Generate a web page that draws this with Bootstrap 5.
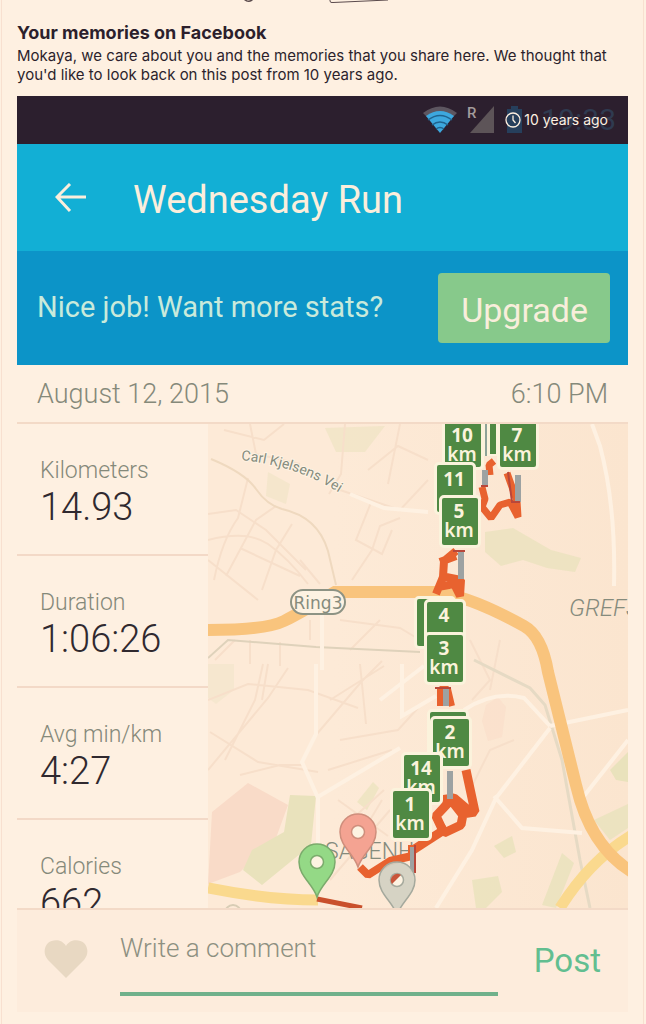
<!DOCTYPE html>
<html lang="en">
<head>
<meta charset="utf-8">
<meta name="viewport" content="width=device-width, initial-scale=1">
<title>Your memories on Facebook</title>
<link href="https://cdn.jsdelivr.net/npm/bootstrap@5.3.0/dist/css/bootstrap.min.css" rel="stylesheet">
<style>
  body { background: #fef0e1; color: #2c1f2c; font-family: Inter, "Liberation Sans", sans-serif; }
  .feed { border-left: 1px solid #f8e0d0; border-right: 1px solid #f8e0d0; padding: 0 15px 13px; margin: 0 2px 0 1px; }
  .prev-post { height: 22px; }
  .memory-title { font-size: 18px; line-height: 22px; font-weight: 700; margin-bottom: 2px; }
  .memory-text { font-size: 15px; line-height: 19px; margin-bottom: 12px; }
  .shot { font-family: Roboto, "Liberation Sans", sans-serif; }
  .statusbar { background: #2c1f2e; height: 48px; padding-right: 12px; }
  .stamp { right: 20px; top: 14px; font: 14px/20px Inter, sans-serif; color: #fef0e1; gap: 3px; }
  .sys-clock { font-size: 30px; line-height: 32px; color: #2f3a50; }
  .appbar { background: #12afd5; color: #fbeedc; height: 107px; padding-left: 38px; gap: 46px; }
  .run-name { font-size: 38px; line-height: 44px; font-weight: 400; padding-top: 4px; }
  .promo { background: #0c94c8; height: 114px; padding: 0 18px 0 20px; color: #c9eadb; font-size: 29px; }
  .btn-upgrade, .btn-upgrade:hover { background: #87c98b; color: #f8eedb; font-size: 34px; line-height: 48px; padding: 13px 22px 9px 23px; border: 0; border-radius: 4px; }
  .daterow { height: 59px; padding: 2px 20px 0; font-size: 27px; font-weight: 300; color: #85897a; border-bottom: 2px solid #f3dac7; }
  .run-body { height: 484px; }
  .stats { width: 191px; overflow: hidden; }
  .stat { flex: 0 0 132px; padding: 34px 0 0 23px; border-bottom: 2px solid #f3d9c7; }
  .stat dt { font-size: 23px; line-height: 26px; font-weight: 300; color: #85897a; }
  .stat dd { font-size: 38px; line-height: 46px; font-weight: 300; color: #30292f; margin: 0; }
  .map { min-width: 0; background: #fdead7; }
  .composer { background: #fdecdc; border-top: 2px solid #f3dac7; height: 104px; padding: 0 27px; }
  .like { margin: 0 32px 4px 0; }
  .comment-box { min-width: 0; margin-right: 36px; border: 0; border-bottom: 4px solid #70b18b; border-radius: 0; background: none; color: #85897a; font-size: 26px; font-weight: 300; line-height: 32px; padding: 22px 0 28px; }
  .comment-box:focus { outline: 0; }
  .comment-box::placeholder { color: #8d9081; opacity: 1; }
  .btn-post, .btn-post:hover { color: #62be90; font-size: 33px; line-height: 40px; padding: 0; border: 0; background: none; }
</style>
</head>
<body>
<main class="feed">
  <div class="prev-post">
    <svg class="d-block w-100" height="8" viewBox="17 0 611 8" preserveAspectRatio="xMinYMin slice" fill="none" stroke="#5a4a4c" aria-hidden="true">
      <path d="M244-1q5 5 10-1" stroke-width="1.500"/><path d="M330-2v3q0 2 3 1.500L388 0" stroke-width="1"/>
    </svg>
  </div>
  <h1 class="memory-title">Your memories on Facebook</h1>
  <p class="memory-text">Mokaya, we care about you and the memories that you share here. We thought that you'd like to look back on this post from 10 years ago.</p>

  <article class="shot">
    <div class="statusbar position-relative d-flex align-items-center justify-content-end">
      <svg width="122" height="36" viewBox="0 0 122 36" aria-hidden="true">
        <path d="M4 11Q21-2 38 11L34 15Q21 5 8 15z" fill="#5d5660"/>
        <path d="M7 14q14-10 28 0L21 31z" fill="#3da8de"/>
        <path d="M9 18q12-9 24 0M13 23q8-6 16 0M17 27q4-3 8 0" fill="none" stroke="#1f638e" stroke-width="1.500"/>
        <text x="48" y="16" font-size="15" font-weight="500" fill="#a39c9c">R</text>
        <path d="M51 31 75 4v27z" fill="#5d5458"/>
        <path d="M88 7h4V4h7v3h4v24H88z" fill="#263f5c"/>
      </svg>
      <span class="sys-clock" aria-hidden="true">19:33</span>
      <div class="stamp position-absolute d-flex align-items-center">
        <svg width="16" height="16" viewBox="0 0 16 16" fill="none" stroke="currentColor" stroke-width="1.300" aria-hidden="true"><circle cx="8" cy="8" r="7"/><path d="M8 3.500V8l2.500 3"/></svg>
        <span>10 years ago</span>
      </div>
    </div>

    <header class="appbar d-flex align-items-center">
      <a href="#" class="text-reset" aria-label="Back">
        <svg class="d-block" width="32" height="30" viewBox="0 0 32 30" fill="none" stroke="currentColor" stroke-width="3" aria-hidden="true"><path d="M15 1 2 14l13 14M2 14h29"/></svg>
      </a>
      <h2 class="run-name mb-0">Wednesday Run</h2>
    </header>

    <section class="promo d-flex align-items-center justify-content-between">
      <span>Nice job! Want more stats?</span>
      <button type="button" class="btn btn-upgrade">Upgrade</button>
    </section>

    <div class="daterow d-flex align-items-center justify-content-between">
      <span>August 12, 2015</span><span>6:10 PM</span>
    </div>

    <div class="run-body d-flex">
      <dl class="stats d-flex flex-column flex-shrink-0 mb-0">
        <div class="stat"><dt>Kilometers</dt><dd>14.93</dd></div>
        <div class="stat"><dt>Duration</dt><dd>1:06:26</dd></div>
        <div class="stat"><dt>Avg min/km</dt><dd>4:27</dd></div>
        <div class="stat"><dt>Calories</dt><dd>662</dd></div>
      </dl>
      <svg class="map flex-fill h-100" viewBox="208 424 420 484" preserveAspectRatio="xMidYMid slice" role="img" aria-label="Route map">
        <defs>
          <path id="street" d="M241 460Q300 466 346 497"/>
          <path id="pin" d="M0 35C-4 22-18 14-18 0A18 18 0 0 1 18 0C18 14 4 22 0 35z"/>
          <rect id="tile" width="36" height="47" rx="2" fill="#4f8943" stroke="#fbf3dc" stroke-width="6" paint-order="stroke"/>
          <linearGradient id="land"><stop offset=".3" stop-color="#fdead7"/><stop offset="1" stop-color="#fbe5cf"/></linearGradient>
        </defs>
        <!-- land -->
        <path d="M208 424H628V908H208z" fill="url(#land)"/>
        <g fill="#f9dbc8"><path d="M212 812 248 783 288 805 276 838 240 872 208 884z"/><path d="M486 705l12-8 8 10-4 30-14 4-6-20z" opacity=".5"/></g>
        <g fill="#e9e2bc">
          <path d="M290 795 316 796 311 845 262 885 243 870 252 850 284 832z"/>
          <path d="M325 428 385 426 365 452 336 452z" opacity=".5"/>
          <path d="M268 472l22 12-4 20-20-8z" opacity=".4"/>
          <path d="M485 532l28-4 38 22 30 8-6 14-28-4-24-8-22 6-16-14z" opacity=".75"/>
          <path d="M357 802l16-20 6 6-12 22z" opacity=".7"/>
          <path d="M494 846l18-10 4 16-12 6zM472 880l26-4 4 16-16 16H476zM542 905l20-52 12 10-18 45zM594 820l34-16v24l-18 12z" opacity=".8"/>
          <path d="M610 770l18-18v30l-12-2z"/>
          <path d="M208 664h26v26l-18 14-8-6z" opacity=".3"/>
        </g>
        <!-- small streets -->
        <g fill="none" stroke="#f7dfca" stroke-width="2">
          <path d="M208 540q40-10 60 4t40 40M208 514l28-4 30 20 40 40M214 580q8-40 24-62l10-40M226 576l30-56 20-14M240 548l60 28M262 590l14-40 16-26M208 560l50 40M300 560l20 24M224 430l40 10 20-16M250 424l6 30 44 10M345 424l-4 50-12 20M340 490l60 20 28-30M368 470l30-24 30 14M352 580l20-30 8-24 20-8M372 500l-16 40 26 14 10-24M400 424l-12 60M208 700l40-16 60 6 50 18M225 760l30-60 8-36M208 770l60-72 20-30M210 732l48 30 60 10M240 775l40-10 22 0M316 735l46-54 20-20M340 740l58-10 20-22M330 700l54-34M328 770l64-20M268 664l-6 36M360 664l6 60M338 800l50 36M340 830l44-40M352 850l30-50M330 880l60-70"/>
          <path d="M340 620l60 8 20 12M350 650l30-30M310 640v-20M470 640l20 40-18 20M500 640l-10 50M470 790l20-40 24-10M215 660l20-20M250 640v24M280 642v24"/>
        </g>
        <g fill="none" stroke="#efd9bf" stroke-width="2">
          <path d="M211 459q34 14 45 30t26 20q36 8 46 42l8 34"/>
          <path d="M208 658 228 640 316 647 420 652" stroke="#dfd2bb"/>
          <path d="M474 660 530 688 545 705 562 760 580 860 590 908" stroke="#e6dac4" stroke-width="3"/>
        </g>
        <g fill="none" stroke="#fef1e2" stroke-width="4">
          <path d="M316 664v70l-14 28 16 36v46M316 798l84-50M402 664v52l34-20M350 494l34 14 44 4M592 424l8 22q16 60 14 140M464 710q30-20 60-12l26 28M550 726 628 710M550 728 496 798 472 850 436 908M494 796l28 32 60 5M584 796l44-56"/>
          <path d="M322 590v80M380 700l44-34"/>
        </g>
        <!-- main roads -->
        <path d="M208 888q60 12 110 12M560 908Q590 860 632 835" fill="none" stroke="#fad98e" stroke-width="11"/>
        <path d="M208 630q58 0 76-9T335 592l50 0 50 0Q470 596 524 626Q542 636 548 672L576 785Q590 846 632 872" fill="none" stroke="#f9c47d" stroke-width="12"/>
        <circle cx="233" cy="913" r="8" fill="none" stroke="#d8cdb5" stroke-width="2"/>
        <!-- labels -->
        <g font-family="Roboto, sans-serif" fill="#858b7d">
          <text font-size="14" stroke="#fdf3e4" stroke-width="2" paint-order="stroke"><textPath href="#street">Carl Kjelsens Vei</textPath></text>
          <rect x="291" y="590" width="54" height="24" rx="12" fill="#fdf2e2" stroke="#8d9384" stroke-width="2"/>
          <text x="318" y="609" font-size="17" text-anchor="middle" font-family="DejaVu Sans, sans-serif">Ring3</text>
          <text x="569" y="616" font-size="24" font-weight="300" font-style="italic">GREFS</text>
          <text x="325" y="859" font-size="23" font-weight="300">SAGENH</text>
        </g>
        <!-- route -->
        <g fill="none" stroke="#e8622f" stroke-width="8" stroke-linejoin="bevel">
          <path d="M494 461l-5 4 1 10M482 487l3 12-3 8 9 11 9-13 10-3 8 15-1-16-10-28" stroke-width="7"/>
          <path d="M456 551l-12 10-1 16-7 17M440 562l16-6M441 576l20 4-1 16-6-12-16 3"/>
          <path d="M440 706v-17h8l4 17" stroke-width="6"/>
          <path d="M466 770l9 42-13 2-11-14-15 16 8 17 17-8 3-16M440 800l14-2 14 12" stroke-width="9"/>
          <path d="M447 828l-34 22" stroke-width="9"/>
          <path d="M360 867l8 8 22-14 22-5v-11"/>
          <path d="M317 899l45 9" stroke="#c9502c" stroke-width="5"/>
        </g>
        <path d="M485 470v17M518 475v27M461 551v28M446 688v18M450 771v28M413 847v25" fill="none" stroke="#9da2a2" stroke-width="6"/>
        <g fill="none" stroke="#b9473a" stroke-width="2"><path d="M508 472l4 30h8M453 551h12M481 486h7M435 688h16M415 845v28"/></g>
        <!-- kilometre markers -->
        <g font-family="Noto Sans, sans-serif" font-size="19" font-weight="600" fill="#fbf3dc" text-anchor="middle">
          <path d="M482 424h16v32h-16z"/><path d="M490 424h6v30h-6z" fill="#4f8943"/><path d="M486 424v32" stroke="#8da398" stroke-width="2"/>
          <g transform="translate(445 420)"><use href="#tile"/><text x="17" y="22" font-weight="700">10</text><text x="17" y="41">km</text></g>
          <g transform="translate(500 420)"><use href="#tile"/><text x="17" y="22" font-weight="700">7</text><text x="17" y="41">km</text></g>
          <g transform="translate(437 465)"><use href="#tile"/><text x="17" y="21" font-weight="700">11</text></g>
          <g transform="translate(442 498)"><use href="#tile"/><text x="17" y="20" font-weight="700">5</text><text x="17" y="39">km</text></g>
          <g transform="translate(417 599)"><use href="#tile"/></g>
          <g transform="translate(427 602)"><use href="#tile"/><text x="17" y="20" font-weight="700">4</text></g>
          <g transform="translate(427 635)"><use href="#tile"/><text x="17" y="20" font-weight="700">3</text><text x="17" y="39">km</text></g>
          <g transform="translate(430 712)"><use href="#tile"/></g>
          <g transform="translate(433 719)"><use href="#tile"/><text x="17" y="20" font-weight="700">2</text><text x="17" y="39">km</text></g>
          <g transform="translate(404 755)"><use href="#tile"/><text x="17" y="20" font-weight="700">14</text><text x="17" y="39">km</text></g>
          <g transform="translate(393 791)"><use href="#tile"/><text x="17" y="20" font-weight="700">1</text><text x="17" y="39">km</text></g>
        </g>
        <!-- pins -->
        <g stroke-width="1.500">
          <g transform="translate(358 832)"><use href="#pin" fill="#f4a392" stroke="#cf8e7c"/><circle r="6.500" fill="#fdf3e2" stroke="#cf8e7c"/></g>
          <g transform="translate(317 862)"><use href="#pin" fill="#94d986" stroke="#7bab6c"/><circle r="6.500" fill="#fdf3e2" stroke="#7bab6c"/></g>
          <g transform="translate(397 880)"><use href="#pin" fill="#d3d0c2" stroke="#a5a99d" fill-opacity=".92"/><circle r="6.500" fill="#fdf3e2" stroke="#a5a99d"/><path d="M-5 4A6.500 6.500 0 0 1 4-5z" fill="#c8553a" stroke="none"/></g>
        </g>
      </svg>
    </div>

    <form class="composer d-flex" onsubmit="return false">
      <button type="button" class="btn like border-0 p-0 align-self-center" aria-label="Like">
        <svg class="d-block" width="44" height="38" viewBox="0 0 44 38" aria-hidden="true"><path d="M22 38 4 20C-1 14 0 7 4 3 9-1 18-1 22 6 26-1 35-1 40 3c4 4 5 11 0 17z" fill="#e8d8c2"/></svg>
      </button>
      <label for="comment" class="visually-hidden">Write a comment</label>
      <input id="comment" type="text" class="comment-box flex-fill align-self-start" placeholder="Write a comment">
      <button type="submit" class="btn btn-post align-self-center">Post</button>
    </form>
  </article>
</main>
<script src="https://cdn.jsdelivr.net/npm/bootstrap@5.3.0/dist/js/bootstrap.bundle.min.js"></script>
</body>
</html>
